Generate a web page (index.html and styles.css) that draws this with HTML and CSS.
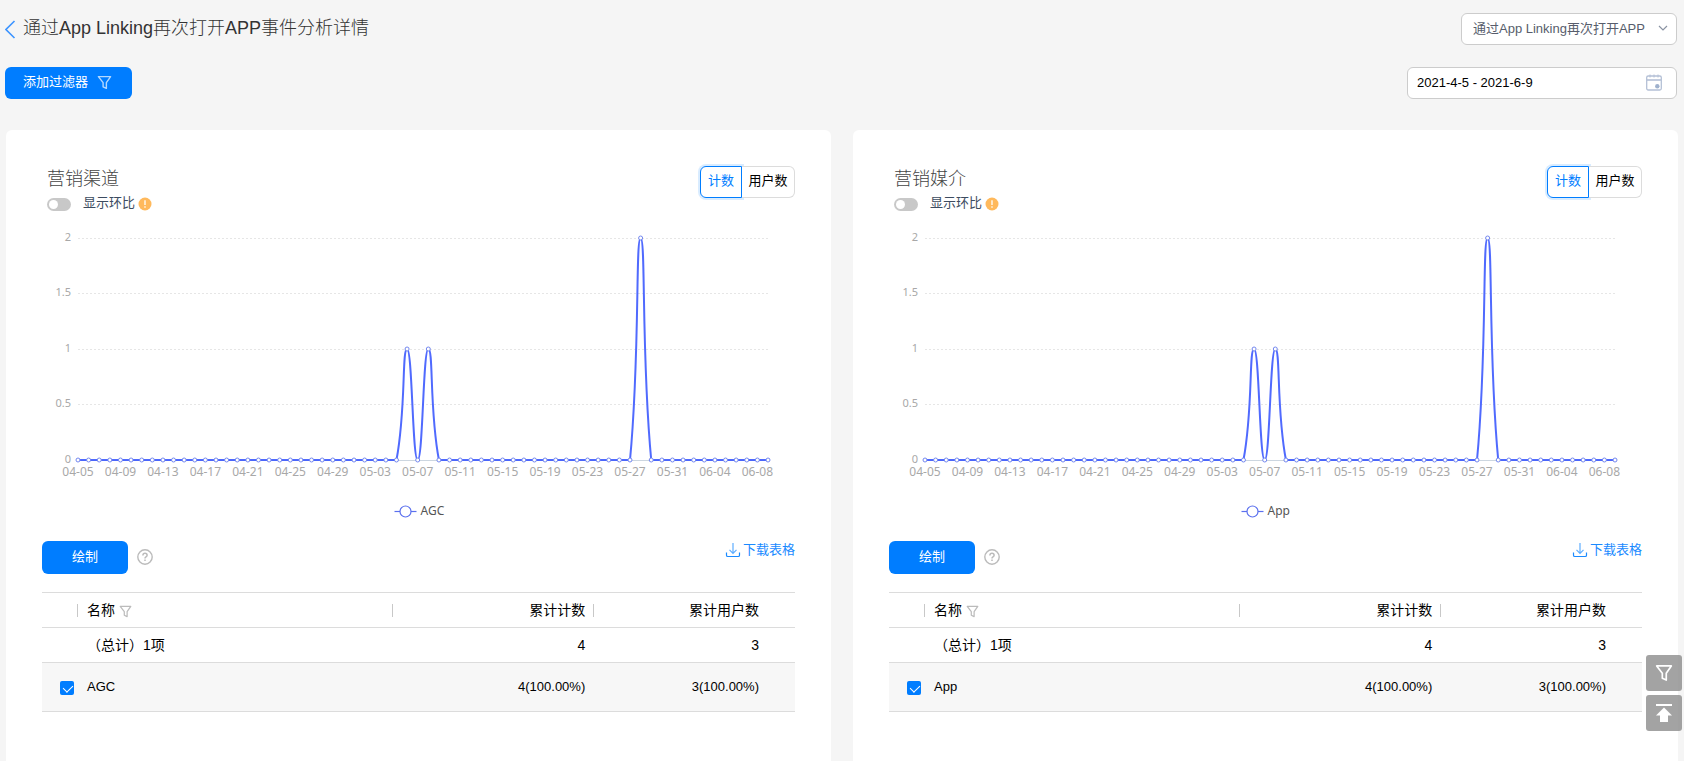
FILE: index.html
```html
<!DOCTYPE html>
<html lang="zh-CN">
<head>
<meta charset="utf-8">
<title>事件分析详情</title>
<link rel="stylesheet" href="styles.css">
</head>
<body>
<svg class="sprite" aria-hidden="true">
  <symbol id="funnel" viewBox="0 0 16 16"><path d="M1.5 1.7h13L10 8.2v6.1L6.5 12.6V8.2z" fill="none" stroke="currentColor" stroke-width="1.5" stroke-linejoin="round"/></symbol>
  <symbol id="download" viewBox="0 0 16 16"><path d="M1.500 10.500v2.700q0 1.300 1.300 1.300h10.400q1.300 0 1.300-1.300V10.500" fill="none" stroke="currentColor" stroke-width="1.200"/><path d="M8 1v10M4.500 7.800L8 11.300l3.500-3.500" fill="none" stroke="currentColor" stroke-width="1.200" opacity=".7"/></symbol>
  <symbol id="help" viewBox="0 0 16 16"><circle cx="8" cy="8" r="7.200" fill="none" stroke="currentColor" stroke-width="1.400"/><path d="M5.900 6.500q0-2.200 2.100-2.200t2.100 1.900q0 1-1.100 1.700T8 9.500M8 10.600v1.500" fill="none" stroke="currentColor" stroke-width="1.500"/></symbol>
  <symbol id="warn" viewBox="0 0 14 14"><circle cx="7" cy="7" r="6.500" fill="#ffb95c"/><path d="M7 3.200v4.800M7 9.300v1.500" stroke="#fff" stroke-width="1.300"/></symbol>
</svg>

<header class="topbar">
  <h1 class="title"><a class="back" href="#" aria-label="返回"><svg width="12" height="20" viewBox="0 0 12 20"><path d="M9.500 2L1 10.500L9.500 19" fill="none" stroke="#3d94ff" stroke-width="1.600"/></svg></a>通过App Linking再次打开APP事件分析详情</h1>
  <div class="select-box">
    <select class="field event-select" aria-label="事件"><option>通过App Linking再次打开APP</option></select>
    <svg class="chevron" width="10" height="6" viewBox="0 0 10 6"><path d="M1 1l4 4 4-4" fill="none" stroke="#8a93a3" stroke-width="1.200"/></svg>
  </div>
</header>
<div class="toolbar">
  <button class="primary filter-button" type="button">添加过滤器 <svg width="15" height="15"><use href="#funnel"/></svg></button>
  <div class="date-box">
    <input class="field date-input" type="text" value="2021-4-5 - 2021-6-9" aria-label="日期范围">
    <svg class="calendar" width="16" height="17" viewBox="0 0 16 17"><g fill="none" stroke="#b4c0d6"><rect x=".7" y="2" width="14.600" height="14" rx="1.500" stroke-width="1.300"/><path d="M1 6h14" stroke-width="1.600"/><path d="M4 .5v3M8 .5v3M12 .5v3"/></g><circle cx="11.300" cy="12.300" r="2.200" fill="#9fb1cd"/></svg>
  </div>
</div>

<main class="cards">
  <section class="card">
    <div class="card-head">
      <div>
        <h2 class="card-title">营销渠道</h2>
        <label class="compare"><input class="switch" type="checkbox" role="switch"><span>显示环比</span><svg width="14" height="14"><use href="#warn"/></svg></label>
      </div>
      <div class="segment"><button class="seg active" type="button">计数</button><button class="seg" type="button">用户数</button></div>
    </div>
    <div class="chart" data-series="AGC"></div>
    <div class="actions">
      <button class="primary draw" type="button">绘制</button>
      <svg class="help" width="16" height="16"><use href="#help"/></svg>
      <a class="download" href="#"><svg width="16" height="16"><use href="#download"/></svg>下载表格</a>
    </div>
    <table class="data">
      <colgroup><col class="c-check"><col class="c-name"><col class="c-count"><col class="c-user"></colgroup>
      <thead><tr><th></th><th class="name">名称 <svg width="13" height="13"><use href="#funnel"/></svg></th><th class="num">累计计数</th><th class="num last">累计用户数</th></tr></thead>
      <tbody>
        <tr><td></td><td class="name">（总计）1项</td><td class="num">4</td><td class="num last">3</td></tr>
        <tr class="item"><td class="check"><input class="tick" type="checkbox" id="row-agc" checked></td><td class="name"><label for="row-agc">AGC</label></td><td class="num">4(100.00%)</td><td class="num last">3(100.00%)</td></tr>
      </tbody>
    </table>
  </section>

  <section class="card">
    <div class="card-head">
      <div>
        <h2 class="card-title">营销媒介</h2>
        <label class="compare"><input class="switch" type="checkbox" role="switch"><span>显示环比</span><svg width="14" height="14"><use href="#warn"/></svg></label>
      </div>
      <div class="segment"><button class="seg active" type="button">计数</button><button class="seg" type="button">用户数</button></div>
    </div>
    <div class="chart" data-series="App"></div>
    <div class="actions">
      <button class="primary draw" type="button">绘制</button>
      <svg class="help" width="16" height="16"><use href="#help"/></svg>
      <a class="download" href="#"><svg width="16" height="16"><use href="#download"/></svg>下载表格</a>
    </div>
    <table class="data">
      <colgroup><col class="c-check"><col class="c-name"><col class="c-count"><col class="c-user"></colgroup>
      <thead><tr><th></th><th class="name">名称 <svg width="13" height="13"><use href="#funnel"/></svg></th><th class="num">累计计数</th><th class="num last">累计用户数</th></tr></thead>
      <tbody>
        <tr><td></td><td class="name">（总计）1项</td><td class="num">4</td><td class="num last">3</td></tr>
        <tr class="item"><td class="check"><input class="tick" type="checkbox" id="row-app" checked></td><td class="name"><label for="row-app">App</label></td><td class="num">4(100.00%)</td><td class="num last">3(100.00%)</td></tr>
      </tbody>
    </table>
  </section>
</main>

<div class="floating">
  <button class="float-button" type="button" aria-label="过滤"><svg width="18" height="18"><use href="#funnel"/></svg></button>
  <button class="float-button" type="button" aria-label="回到顶部"><svg width="18" height="20" viewBox="0 0 18 20"><path d="M1 1h16v2H1zM9 4.500L17 12.500H13V19H5V12.500H1z" fill="#fff"/></svg></button>
</div>
<script src="chart.js"></script>
</body>
</html>
```
FILE: styles.css
```css
* { box-sizing: border-box; }
body {
  margin: 0;
  min-height: 100vh;
  display: flex;
  flex-direction: column;
  background: #f5f5f5;
  color: #000;
  font: 13px/20px "Liberation Sans", "Noto Sans CJK SC", sans-serif;
}
button, input, select { font: inherit; margin: 0; }
svg { flex: none; }
.sprite { position: absolute; width: 0; height: 0; }

.topbar, .toolbar {
  display: flex;
  justify-content: space-between;
  padding: 0 7px 0 5px;
}
.topbar { padding-top: 13px; }
.title {
  display: flex;
  gap: 6px;
  margin: 0;
  font-size: 18px;
  line-height: 30px;
  font-weight: 300;
  color: #333;
}
.back { display: flex; align-items: center; }
.field {
  width: 100%;
  height: 32px;
  border: 1px solid #ccc;
  border-radius: 6px;
  background: #fff;
  outline: 0;
}
.select-box { position: relative; width: 216px; }
.event-select { appearance: none; padding: 0 24px 0 11px; color: #575d6c; display: block; }
.chevron { position: absolute; right: 9px; top: 12px; pointer-events: none; }
.toolbar { margin-top: 22px; }
.date-box { position: relative; width: 270px; }
.date-input { display: block; padding: 0 36px 2px 9px; color: #000; }
.calendar { position: absolute; right: 15px; top: 7px; }

.primary {
  border: 0;
  border-radius: 6px;
  background: #007dff;
  color: #fff;
  padding: 0 0 2px;
}
.filter-button {
  display: flex;
  align-items: center;
  justify-content: center;
  gap: 9px;
  width: 127px;
  height: 32px;
  padding-right: 2px;
}
.filter-button svg { opacity: .7; }

.cards {
  flex: 1;
  display: grid;
  grid-template-columns: 1fr 1fr;
  gap: 22px;
  margin-top: 31px;
  padding: 0 6px;
}
.card {
  min-width: 0;
  padding: 36px 36px 48px;
  border-radius: 6px 6px 0 0;
  background: #fff;
}
.card-head { display: flex; justify-content: space-between; align-items: flex-start; padding-left: 5px; }
.card-title { margin: 0; font-size: 18px; line-height: 26px; font-weight: 300; color: #444; }
.compare { display: flex; align-items: center; height: 24px; color: #3c4b60; }
.compare span { margin: 0 3px 0 12px; line-height: 20px; padding-bottom: 2px; }
.switch {
  appearance: none;
  width: 24px;
  height: 13px;
  padding: 2px;
  border-radius: 7px;
  background: #c8c8c8;
}
.switch::before { content: ""; display: block; width: 9px; height: 9px; border-radius: 50%; background: #fff; }
.segment { display: flex; }
.seg {
  height: 32px;
  width: 53px;
  padding: 0 0 2px;
  border: 1px solid #dcdcdc;
  border-left: 0;
  border-radius: 0 6px 6px 0;
  background: #fff;
  color: #000;
}
.seg.active {
  width: 42px;
  border: 1px solid #007dff;
  border-radius: 6px 0 0 6px;
  box-shadow: 0 0 0 2px rgba(0, 125, 255, .15);
  color: #007dff;
}

.chart { height: 310px; margin-top: 4px; }
.chart svg { display: block; width: 100%; height: 310px; overflow: visible; }
.chart text { font: 12px "Noto Sans", sans-serif; fill: #a8a8a8; }
.chart .scale { font-size: 11px; }
.chart .legend { fill: #555; }
.chart .grid { stroke: #e6e6e6; stroke-dasharray: 2 2; }
.chart .axis { stroke: #ccd6e0; }
.chart .line { fill: none; stroke: #3d5afe; stroke-width: 2; stroke-opacity: .9; }
.chart .dot { fill: #fff; stroke: #7387ef; }
.chart .mark { fill: #fff; stroke: #5b70ee; stroke-width: 1.2; }

.actions { display: flex; align-items: center; height: 33px; margin-top: 11px; }
.draw { width: 86px; height: 33px; }
.help { margin: 0 0 2px 9px; color: #bbb; }
.download {
  display: flex;
  align-items: center;
  align-self: flex-start;
  gap: 2px;
  height: 17px;
  margin-left: auto;
  color: #1a8aff;
  text-decoration: none;
}

.data { width: 100%; margin-top: 18px; border-collapse: collapse; table-layout: fixed; }
.c-check { width: 36px; }
.c-name { width: 44%; }
.c-count { width: 28%; }
.c-user { width: 28%; }
.data tr { height: 35px; border-top: 1px solid #dcdcdc; border-bottom: 1px solid #dcdcdc; }
.data th, .data td { padding: 0 9px; font-size: 14px; font-weight: 400; text-align: left; white-space: nowrap; }
.data th:not(.last) {
  background: linear-gradient(#c8c8c8, #c8c8c8) right center / 1px 13px no-repeat;
}
.data th svg { vertical-align: -3px; color: #bbb; }
.data .num { text-align: right; }
.data .last { padding-right: 36px; }
.data .item { height: 49px; background: #f7f7f7; }
.data .item td { font-size: 13px; }
.data .item .check { padding: 2px 4px 0 18px; }
.tick {
  appearance: none;
  display: block;
  position: relative;
  width: 14px;
  height: 14px;
  border-radius: 2px;
  background: #007dff;
}
.tick:checked::after {
  content: "";
  position: absolute;
  left: 5px;
  top: 2px;
  width: 5px;
  height: 8px;
  border: solid #fff;
  border-width: 0 1px 1px 0;
  transform: rotate(45deg);
}

.floating { position: fixed; right: 2px; bottom: 30px; display: grid; gap: 4px; }
.float-button {
  display: grid;
  place-items: center;
  width: 36px;
  height: 36px;
  padding: 0;
  border: 0;
  border-radius: 3px;
  background: rgba(140, 140, 140, .8);
  color: #fff;
}
```
FILE: chart.js
```js
const values = Array(66).fill(0);
values[31] = 1;
values[33] = 1;
values[53] = 2;

const LEFT = 36, RIGHT = 27, TOP = 18, BASE = 240, MAX = 2;

function dateLabel(i) {
  const d = new Date(Date.UTC(2021, 3, 5 + i));
  return d.toISOString().slice(5, 10);
}

// Smooth path whose control points stay inside the plotted range.
function smoothPath(pts) {
  const clamp = y => Math.min(BASE, Math.max(TOP, y));
  let d = `M${pts[0][0]} ${pts[0][1]}`;
  let out = pts[0];
  for (let i = 1; i < pts.length; i++) {
    const p = pts[i], a = pts[i - 1], b = pts[i + 1];
    let into = p, next = p;
    if (b) {
      const la = Math.hypot(p[0] - a[0], p[1] - a[1]);
      const lb = Math.hypot(b[0] - p[0], b[1] - p[1]);
      const r = lb / (la + lb), vx = (b[0] - a[0]) / 2, vy = (b[1] - a[1]) / 2;
      into = [p[0] - vx * (1 - r), clamp(p[1] - vy * (1 - r))];
      next = [p[0] + vx * r, clamp(p[1] + vy * r)];
    }
    d += `C${out[0]} ${out[1]} ${into[0]} ${into[1]} ${p[0]} ${p[1]}`;
    out = next;
  }
  return d;
}

function draw(el) {
  const w = el.clientWidth, right = w - RIGHT;
  const step = (right - LEFT) / (values.length - 1);
  const pts = values.map((v, i) => [LEFT + i * step, BASE - v * (BASE - TOP) / MAX]);
  let s = '';
  for (let v = 0; v <= MAX; v += 0.5) {
    const y = Math.floor(BASE - v * (BASE - TOP) / MAX) + 0.5;
    s += `<line class="${v ? 'grid' : 'axis'}" x1="${LEFT}" x2="${right}" y1="${y}" y2="${y}"/>`;
    s += `<text class="scale" x="${LEFT - 7}" y="${y + 2}" text-anchor="end">${v}</text>`;
  }
  for (let i = 0; i < pts.length; i += 4) {
    s += `<text x="${pts[i][0]}" y="${BASE + 16}" text-anchor="middle">${dateLabel(i)}</text>`;
  }
  s += `<path class="line" d="${smoothPath(pts)}"/>`;
  s += pts.map(p => `<circle class="dot" cx="${p[0]}" cy="${p[1]}" r="2"/>`).join('');
  const c = w / 2 - 13;
  s += `<path class="mark" d="M${c - 11} 291.5h22"/><circle class="mark" cx="${c}" cy="291.5" r="5.5"/>`;
  s += `<text class="legend" x="${c + 15}" y="295">${el.dataset.series}</text>`;
  el.innerHTML = `<svg>${s}</svg>`;
}

const charts = document.querySelectorAll('.chart');
const drawAll = () => charts.forEach(draw);
drawAll();
window.addEventListener('resize', drawAll);
```
